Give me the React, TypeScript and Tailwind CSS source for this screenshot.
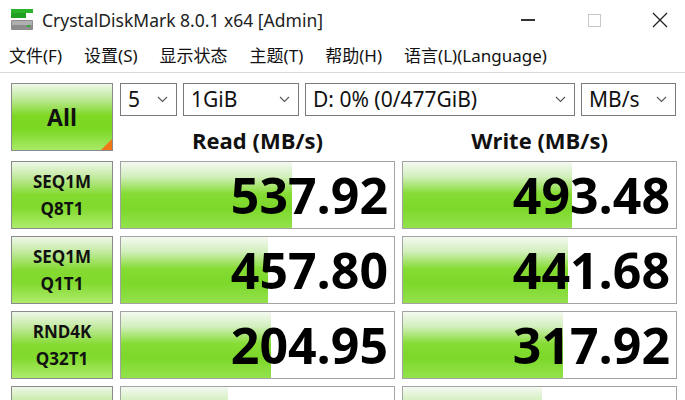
import React from "react";

const rows = [
  { a: "SEQ1M", b: "Q8T1", read: "537.92", rf: 171, write: "493.48", wf: 169 },
  { a: "SEQ1M", b: "Q1T1", read: "457.80", rf: 147, write: "441.68", wf: 165 },
  { a: "RND4K", b: "Q32T1", read: "204.95", rf: 150, write: "317.92", wf: 160 },
  { a: "RND4K", b: "Q1T1", read: "66.38", rf: 107, write: "146.75", wf: 139 },
];

const menus = ["文件(F)", "设置(S)", "显示状态", "主题(T)", "帮助(H)", "语言(L)(Language)"];

function Chevron() {
  return (
    <svg width="11" height="7" viewBox="0 0 11 7" className="shrink-0">
      <path d="M1 1l4.5 4.5L10 1" fill="none" stroke="#555" strokeWidth="1.1" />
    </svg>
  );
}

function Select({ w, text }: { w: string; text: string }) {
  return (
    <div
      className={`${w} h-[33px] border border-[#7a7a7a] bg-white flex items-center justify-between pl-[7px] pr-[8px] text-[21px] text-[#111]`}
      style={{ fontFamily: '"Noto Sans", sans-serif' }}
    >
      <span>{text}</span>
      <Chevron />
    </div>
  );
}

function Value({ value, fill }: { value: string; fill: number }) {
  return (
    <div className="relative w-[275px] h-[68px] border border-[#a3a3a3] bg-white overflow-hidden">
      <div
        className="absolute left-0 top-0 bottom-0 bg-[linear-gradient(to_bottom,#f4f9f1_0%,#d2efbd_22%,#86dc34_48%,#7cd82a_70%,#94e24c_100%)]"
        style={{ width: fill }}
      />
      <div className="relative h-full flex items-center justify-end pr-[6px] text-[50px] font-bold text-black leading-none">
        {value}
      </div>
    </div>
  );
}

export default function App() {
  return (
    <div
      className="w-[685px] h-[400px] bg-white overflow-hidden text-[#111]"
      style={{ fontFamily: '"Open Sans", "Noto Sans CJK SC", sans-serif' }}
    >
      {/* title bar */}
      <div className="h-[40px] flex items-center">
        <svg width="24" height="22" viewBox="0 0 24 22" className="ml-[10px]">
          <rect x="1" y="0" width="22" height="4" fill="#2bb32b" />
          <rect x="1" y="4" width="15" height="5" fill="#22a022" />
          <rect x="1" y="11" width="22" height="10" rx="1" fill="#8c8c8c" />
          <rect x="2" y="12" width="20" height="4" fill="#b0b0b0" />
          <rect x="17" y="16" width="3" height="2" fill="#3a3" />
        </svg>
        <div className="ml-[8px] text-[17.5px] text-[#222]" style={{ fontFamily: '"Noto Sans", sans-serif' }}>
          CrystalDiskMark 8.0.1 x64 [Admin]
        </div>
        <div className="ml-auto mr-[-8px] flex items-center">
          <div className="w-[66px] flex justify-center">
            <div className="w-[14px] h-[2px] bg-[#333]" />
          </div>
          <div className="w-[66px] flex justify-center">
            <div className="w-[13px] h-[13px] border border-[#c8c8c8]" />
          </div>
          <div className="w-[66px] flex justify-center">
            <svg width="16" height="16" viewBox="0 0 16 16">
              <path d="M1 1l14 14M15 1L1 15" stroke="#222" strokeWidth="1.3" />
            </svg>
          </div>
        </div>
      </div>

      {/* menu bar */}
      <div
        className="h-[33px] flex items-center gap-[22px] pl-[9px] border-b border-[#d9d9d9] text-[17px] text-[#111]"
        style={{ fontFamily: '"Noto Sans", "Noto Sans CJK SC", sans-serif' }}
      >
        {menus.map((m) => (
          <span key={m}>{m}</span>
        ))}
      </div>

      {/* body */}
      <div className="pl-[11px] pt-[10px] flex flex-col gap-[7px]">
        <div className="flex gap-[7px]">
          <div className="relative w-[102px] h-[68px] border border-[#8a8a8a] bg-[linear-gradient(to_bottom,#eef7e9_0%,#bfe99a_22%,#7ed824_48%,#7ad722_68%,#a8ea66_100%)] flex items-center justify-center text-[23px] font-bold">
            All
            <div className="absolute right-0 bottom-0 w-0 h-0 border-l-[11px] border-l-transparent border-b-[11px] border-b-[#f07818]" />
          </div>
          <div className="flex flex-col">
            <div className="flex gap-[6px]">
              <Select w="w-[57px]" text="5" />
              <Select w="w-[116px]" text="1GiB" />
              <Select w="w-[270px]" text="D: 0% (0/477GiB)" />
              <Select w="w-[95px]" text="MB/s" />
            </div>
            <div className="flex gap-[7px] mt-[10px] text-[22px] font-bold leading-[28px]">
              <div className="w-[275px] text-center">Read (MB/s)</div>
              <div className="w-[275px] text-center">Write (MB/s)</div>
            </div>
          </div>
        </div>

        {rows.map((r, i) => (
          <div key={i} className="flex gap-[7px]">
            <div className="w-[102px] h-[68px] border border-[#8a8a8a] bg-[linear-gradient(to_bottom,#eef7e9_0%,#c4eaa2_22%,#84da30_50%,#82da2e_70%,#aeec6e_100%)] flex flex-col items-center justify-center text-[17px] font-bold leading-[27px]">
              <div>{r.a}</div>
              <div>{r.b}</div>
            </div>
            <Value value={r.read} fill={r.rf} />
            <Value value={r.write} fill={r.wf} />
          </div>
        ))}
      </div>
    </div>
  );
}
